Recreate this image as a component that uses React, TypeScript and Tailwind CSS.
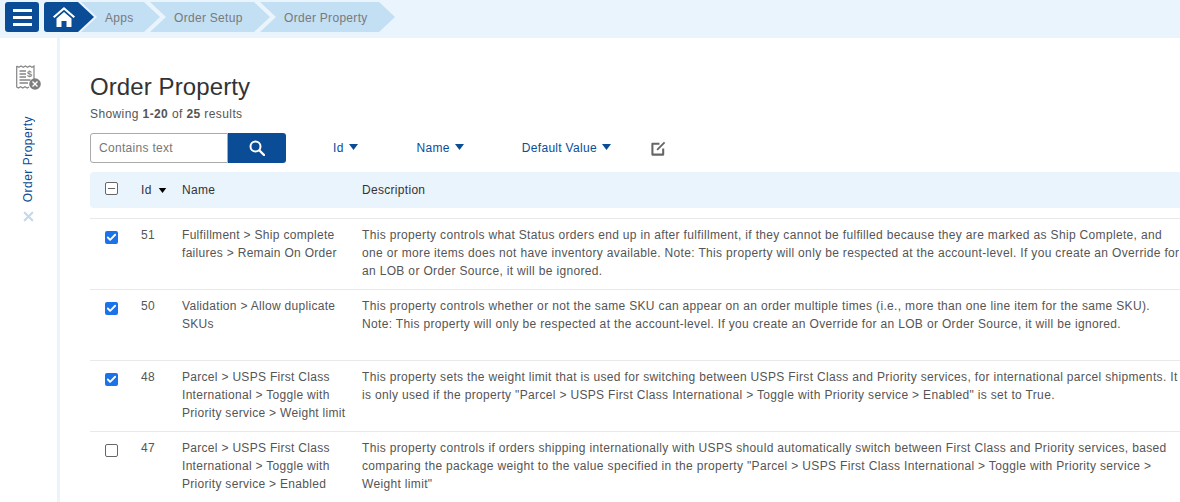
import React from "react";
import { Check, Minus, X } from "lucide-react";

type Row = {
  id: number;
  checked: boolean;
  name: string[];
  description: string[];
};

const rows: Row[] = [
  {
    id: 51,
    checked: true,
    name: ["Fulfillment > Ship complete", "failures > Remain On Order"],
    description: [
      "This property controls what Status orders end up in after fulfillment, if they cannot be fulfilled because they are marked as Ship Complete, and",
      "one or more items does not have inventory available. Note: This property will only be respected at the account-level. If you create an Override for",
      "an LOB or Order Source, it will be ignored.",
    ],
  },
  {
    id: 50,
    checked: true,
    name: ["Validation > Allow duplicate", "SKUs"],
    description: [
      "This property controls whether or not the same SKU can appear on an order multiple times (i.e., more than one line item for the same SKU).",
      "Note: This property will only be respected at the account-level. If you create an Override for an LOB or Order Source, it will be ignored.",
    ],
  },
  {
    id: 48,
    checked: true,
    name: ["Parcel > USPS First Class", "International > Toggle with", "Priority service > Weight limit"],
    description: [
      "This property sets the weight limit that is used for switching between USPS First Class and Priority services, for international parcel shipments. It",
      'is only used if the property "Parcel > USPS First Class International > Toggle with Priority service > Enabled" is set to True.',
    ],
  },
  {
    id: 47,
    checked: false,
    name: ["Parcel > USPS First Class", "International > Toggle with", "Priority service > Enabled"],
    description: [
      "This property controls if orders shipping internationally with USPS should automatically switch between First Class and Priority services, based",
      'comparing the package weight to the value specified in the property "Parcel > USPS First Class International > Toggle with Priority service >',
      'Weight limit"',
    ],
  },
];

const Caret = ({ className }: { className: string }) => (
  <svg viewBox="0 0 9 6" className={className} fill="currentColor">
    <path d="M0 0h9L4.5 6z" />
  </svg>
);

const Lines = ({ lines }: { lines: string[] }) => (
  <>
    {lines.map((line) => (
      <div key={line} className="whitespace-nowrap">
        {line}
      </div>
    ))}
  </>
);

const FilterButton = ({ label, className }: { label: string; className: string }) => (
  <button type="button" className={`flex items-center gap-[5px] text-[12px] tracking-[0.3px] text-[#0a4d96] ${className}`}>
    {label}
    <Caret className="mb-[2px] h-[6px] w-[9px]" />
  </button>
);

const ReceiptIcon = () => (
  <svg viewBox="0 0 25 25" className="h-[25px] w-[25px]" fill="none">
    <path
      d="M.7 1l2.2 1.2L5 1l2.2 1.2L9.4 1l2.2 1.2L13.800 1l2.200 1.200L18 1v13M13 22l-1.800 1-2.200-1.200L6.800 23l-2.200-1.200L2.400 23 .7 22V1"
      stroke="#858585"
      strokeWidth="1.2"
    />
    <path d="M3.500 6h6.500M3.500 9h6.500M3.500 12h6.500M3.500 15h11M3.500 18h8.500" stroke="#858585" strokeWidth="1.400" />
    <text x="11" y="12" fontSize="9" fontWeight="700" fill="#858585" fontFamily="Liberation Sans, sans-serif">
      $
    </text>
    <circle cx="19" cy="19" r="5.800" fill="#7d7d7d" />
    <path d="M16.500 16.500l5 5M21.500 16.500l-5 5" stroke="#ffffff" strokeWidth="1.400" />
  </svg>
);

const Crumb = ({ label, className }: { label: string; className: string }) => (
  <div
    className={`flex h-[30px] items-center bg-[#c2dff3] pt-[1px] text-[12px] tracking-[0.3px] text-[#7a7a7a] [clip-path:polygon(0_0,calc(100%-16px)_0,100%_50%,calc(100%-16px)_100%,0_100%,16px_50%)] ${className}`}
  >
    {label}
  </div>
);

const App = () => {
  return (
    <div className="h-[502px] w-[1180px] overflow-hidden bg-white font-['Liberation_Sans',sans-serif]">
      <header className="flex h-[38px] items-start bg-[#eaf4fd] pl-[5px] pt-[2px]">
        <button type="button" className="flex h-[30px] w-[34px] flex-col items-center justify-center gap-[4px] rounded-[3px] bg-[#0a4d96]">
          <span className="h-[3px] w-[19px] bg-white" />
          <span className="h-[3px] w-[19px] bg-white" />
          <span className="h-[3px] w-[19px] bg-white" />
        </button>
        <div className="ml-[5px] flex h-[30px] w-[50px] items-center rounded-l-[3px] bg-[#0a4d96] pl-[9px] [clip-path:polygon(0_0,34px_0,100%_50%,34px_100%,0_100%)]">
          <svg viewBox="0 0 22 20" className="h-[20px] w-[22px]" fill="#ffffff">
            <path d="M11 0L0 9.500l1.400 1.600L11 2.800l9.600 8.300 1.400-1.600z" />
            <path d="M3.500 11.500L11 5l7.500 6.500V20h-5v-6h-5v6h-5z" />
          </svg>
        </div>
        <Crumb label="Apps" className="-ml-[13px] w-[79px] pl-[24px]" />
        <Crumb label="Order Setup" className="-ml-[10px] w-[120px] pl-[24px]" />
        <Crumb label="Order Property" className="-ml-[10px] w-[135px] pl-[24px]" />
      </header>

      <div className="flex h-[464px]">
        <aside className="flex w-[60px] flex-none flex-col items-center border-r-[3px] border-[#eaf4fd] pt-[27px]">
          <div className="-ml-[1px]">
            <ReceiptIcon />
          </div>
          <div className="-ml-[1px] mt-[26px] rotate-180 text-[12px] tracking-[0.5px] text-[#0a4d96] [writing-mode:vertical-rl]">
            Order Property
          </div>
          <X className="mt-[7px] h-[15px] w-[15px] text-[#c5d9ea]" strokeWidth={3.500} />
        </aside>

        <main className="min-w-0 flex-1 pl-[30px]">
          <h1 className="mt-[34px] text-[24px] leading-[30px] tracking-[0.1px] text-[#333333]">Order Property</h1>
          <div className="mt-[3px] text-[12px] leading-[18px] tracking-[0.4px] text-[#555555]">
            Showing <b>1-20</b> of <b>25</b> results
          </div>

          <div className="mt-[10px] flex h-[30px] items-center">
            <div className="flex h-[30px] w-[138px] items-center rounded-l-[3px] border border-[#aaaaaa] pl-[8px] text-[12px] tracking-[0.3px] text-[#777777]">
              Contains text
            </div>
            <button type="button" className="flex h-[30px] w-[58px] items-center justify-center rounded-r-[3px] bg-[#0a4d96]">
              <svg viewBox="0 0 16 16" className="h-[16px] w-[16px]" fill="none" stroke="#ffffff">
                <circle cx="6.500" cy="6.500" r="5" strokeWidth="2" />
                <path d="M10.500 10.500L15 15" strokeWidth="2.400" strokeLinecap="round" />
              </svg>
            </button>
            <FilterButton label="Id" className="ml-[47px]" />
            <FilterButton label="Name" className="ml-[59px]" />
            <FilterButton label="Default Value" className="ml-[58px]" />
            <svg viewBox="0 0 16 16" className="ml-[40px] h-[15px] w-[15px]" fill="none" stroke="#666666" strokeWidth="2.200">
              <path d="M9 3H1.500v11.500H13V8" strokeLinejoin="round" />
              <path d="M6.500 9.500L14.500 1.500" strokeWidth="2" />
            </svg>
          </div>

          <div className="mt-[9px] flex h-[36px] w-[1100px] items-center rounded-[4px] bg-[#eaf4fd] text-[12px] tracking-[0.3px] text-[#333333]">
            <div className="flex w-[51px] justify-start pb-[4px] pl-[15px]">
              <span className="flex h-[13px] w-[13px] items-center justify-center rounded-[2px] border border-[#666666] bg-white">
                <Minus className="h-[11px] w-[11px] text-[#555555]" strokeWidth={2} />
              </span>
            </div>
            <div className="flex w-[41px] items-center gap-[6px]">
              Id
              <Caret className="h-[5px] w-[9px] text-black" />
            </div>
            <div className="w-[180px]">Name</div>
            <div>Description</div>
          </div>

          <div className="mt-[10px] w-[1100px] border-t border-[#e9e9e9]">
            {rows.map((row) => (
              <div
                key={row.id}
                className="flex h-[71px] border-b border-[#e9e9e9] pt-[7px] text-[12px] leading-[18px] tracking-[0.3px] text-[#555555] last:border-b-0"
              >
                <div className="flex w-[51px] justify-start pl-[16px] pt-[5px]">
                  {row.checked ? (
                    <span className="-ml-[1px] flex h-[13px] w-[13px] items-center justify-center rounded-[2px] bg-[#1a73e8]">
                      <Check className="h-[11px] w-[11px] text-white" strokeWidth={4} />
                    </span>
                  ) : (
                    <span className="-ml-[1px] h-[13px] w-[13px] rounded-[2px] border border-[#666666] bg-white" />
                  )}
                </div>
                <div className="w-[41px]">{row.id}</div>
                <div className="w-[180px]">
                  <Lines lines={row.name} />
                </div>
                <div className="tracking-[0.335px]">
                  <Lines lines={row.description} />
                </div>
              </div>
            ))}
          </div>
        </main>
      </div>
    </div>
  );
};

export default App;
